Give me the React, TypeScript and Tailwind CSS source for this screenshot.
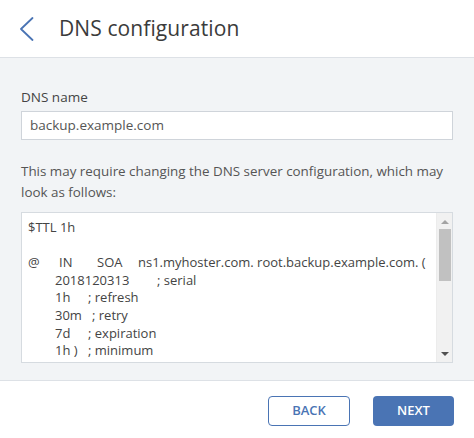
import React from 'react';

const font = { fontFamily: '"Open Sans", "Liberation Sans", sans-serif' };

function FakeScrollbar() {
    return (
        <div className="flex w-[16px] flex-col items-center bg-[#f1f1f1] border-l border-[#ececec]">
            <div className="flex h-[16px] w-full items-center justify-center">
                <svg width="8" height="5" viewBox="0 0 8 5"><path d="M0 5 L4 1 L8 5 Z" fill="#a3a3a3" /></svg>
            </div>
            <div className="h-[52px] w-[12px] bg-[#c1c1c1]" />
            <div className="flex-1" />
            <div className="flex h-[16px] w-full items-center justify-center">
                <svg width="8" height="5" viewBox="0 0 8 5"><path d="M0 0 L4 4 L8 0 Z" fill="#505050" /></svg>
            </div>
        </div>
    );
}

export default function App() {
    return (
        <div className="flex h-[438px] w-[474px] flex-col bg-white text-[#444]" style={font}>
            {/* header */}
            <div className="flex h-[58px] shrink-0 items-center border-b border-[#dde1e6] bg-white">
                <button className="ml-[19px] mr-[25px] flex h-[24px] w-[15px] items-center justify-center">
                    <svg width="15" height="24" viewBox="0 0 15 24" fill="none">
                        <path d="M13.5 1 L2 12 L13.5 23" stroke="#4a74b4" strokeWidth="1.8" strokeLinecap="round" strokeLinejoin="round" />
                    </svg>
                </button>
                <h1 className="text-[21px] font-normal text-[#3b3b3b] tracking-[0.1px]">DNS configuration</h1>
            </div>

            {/* body */}
            <div className="flex h-[323px] shrink-0 flex-col border-b border-[#dde1e6] bg-[#f2f4f6] px-[21px] pt-[29px]">
                <label className="text-[13.5px] leading-[20px] text-[#444]">DNS name</label>
                <div className="mt-[4px] flex h-[29px] items-center border border-[#cfd4da] bg-white px-[8px] text-[13.5px] text-[#555]">
                    backup.example.com
                </div>
                <p className="mt-[21px] text-[13.4px] leading-[21px] text-[#555]">
                    This may require changing the DNS server configuration, which may look as follows:
                </p>
                <div className="mt-[9px] flex h-[151px] border border-[#d6dbe0] bg-white">
                    <div className="flex-1 overflow-hidden pl-[6px] pt-[6px] text-[13px] leading-[17.6px] text-[#444]">
                        <div>$TTL 1h</div>
                        <div>&nbsp;</div>
                        <div className="flex whitespace-nowrap">
                            <span className="w-[31px]">@</span>
                            <span className="w-[38px]">IN</span>
                            <span className="w-[41px]">SOA</span>
                            <span>ns1.myhoster.com. root.backup.example.com. (</span>
                        </div>
                        <div className="flex pl-[27px]">
                            <span className="w-[102px]">2018120313</span>
                            <span>; serial</span>
                        </div>
                        <div className="flex pl-[27px]">
                            <span className="w-[33px]">1h</span>
                            <span>; refresh</span>
                        </div>
                        <div className="flex pl-[27px]">
                            <span className="w-[37px]">30m</span>
                            <span>; retry</span>
                        </div>
                        <div className="flex pl-[27px]">
                            <span className="w-[33px]">7d</span>
                            <span>; expiration</span>
                        </div>
                        <div className="flex pl-[27px]">
                            <span className="w-[33px]">1h )</span>
                            <span>; minimum</span>
                        </div>
                    </div>
                    <FakeScrollbar />
                </div>
            </div>

            {/* footer */}
            <div className="flex flex-1 items-start justify-end gap-[23px] pr-[20px] pt-[15px]">
                <button className="h-[30px] w-[82px] rounded-[4px] border-[1.5px] border-[#4a74b4] bg-white text-[13px] font-semibold text-[#4a74b4]">
                    BACK
                </button>
                <button className="h-[30px] w-[81px] rounded-[4px] bg-[#4a74b4] text-[13px] font-semibold text-white">
                    NEXT
                </button>
            </div>
        </div>
    );
}
